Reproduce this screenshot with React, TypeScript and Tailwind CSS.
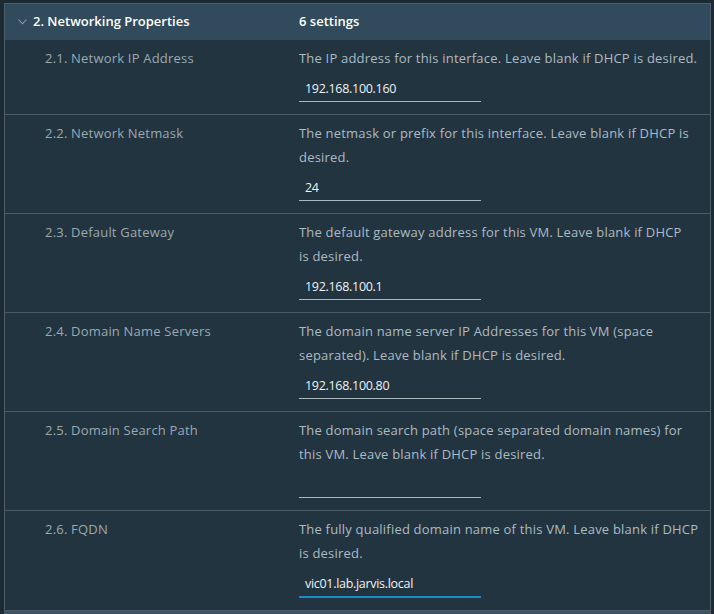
import React from 'react';

interface Setting {
  id: string;
  label: string;
  description: string;
  value: string;
  focused?: boolean;
}

const settings: Setting[] = [
  {
    id: '2.1.',
    label: 'Network IP Address',
    description: 'The IP address for this interface. Leave blank if DHCP is desired.',
    value: '192.168.100.160',
  },
  {
    id: '2.2.',
    label: 'Network Netmask',
    description: 'The netmask or prefix for this interface. Leave blank if DHCP is desired.',
    value: '24',
  },
  {
    id: '2.3.',
    label: 'Default Gateway',
    description: 'The default gateway address for this VM. Leave blank if DHCP is\u00a0desired.',
    value: '192.168.100.1',
  },
  {
    id: '2.4.',
    label: 'Domain Name Servers',
    description:
      'The domain name server IP Addresses for this VM (space separated). Leave blank if DHCP is desired.',
    value: '192.168.100.80',
  },
  {
    id: '2.5.',
    label: 'Domain Search Path',
    description:
      'The domain search path (space separated domain names) for this VM. Leave blank if DHCP is desired.',
    value: '',
  },
  {
    id: '2.6.',
    label: 'FQDN',
    description: 'The fully qualified domain name of this VM. Leave blank if DHCP is\u00a0desired.',
    value: 'vic01.lab.jarvis.local',
    focused: true,
  },
];

const SettingRow: React.FC<{ setting: Setting; first?: boolean }> = ({ setting, first }) => (
  <div className={`flex pt-[6px] pb-[12px] ${first ? '' : 'border-t border-[#4a5b67]'}`}>
    <div className="w-[294px] shrink-0 pl-[40px] leading-[24px] tracking-[0.2px] text-[#9aa9b3]">
      {setting.id} {setting.label}
    </div>
    <div className="flex-1 pr-[10px]">
      <p className="leading-[24px] tracking-[0.2px] text-[#adbbc3]">{setting.description}</p>
      <div
        className={`mt-[7px] w-[182px] px-[6px] text-[12.5px] leading-[24px] tracking-[-0.3px] text-[#eef2f4] ${
          setting.focused ? 'h-[26px] border-b-2 border-[#1a8bc4]' : 'h-[25px] border-b border-[#aab8c0]'
        }`}
      >
        {setting.value}
      </div>
    </div>
  </div>
);

export default function App() {
  return (
    <div
      className="h-[614px] w-[714px] overflow-hidden bg-[#1b2a33] pl-[4px] pr-[3px] pt-[3px] text-[13px]"
      style={{ fontFamily: '"Open Sans", "Noto Sans", sans-serif' }}
    >
      <div className="border border-[#4e5f6b] bg-[#22343f]">
        {/* Section header */}
        <div className="flex h-[36px] items-center bg-[#314a5c] font-semibold text-white">
          <div className="flex w-[294px] shrink-0 items-center pl-[13px]">
            <svg width="9" height="6" viewBox="0 0 9 6" className="mr-[6px]">
              <path d="M0.5 0.5 L4.5 4.8 L8.5 0.5" fill="none" stroke="#8fa3b1" strokeWidth="1.1" />
            </svg>
            <span>2. Networking Properties</span>
          </div>
          <div>6 settings</div>
        </div>

        {settings.map((s, i) => (
          <SettingRow key={s.id} setting={s} first={i === 0} />
        ))}

        <div className="h-[6px] border-t border-[#4a5b67] bg-[#3a5466]" />
      </div>
    </div>
  );
}
